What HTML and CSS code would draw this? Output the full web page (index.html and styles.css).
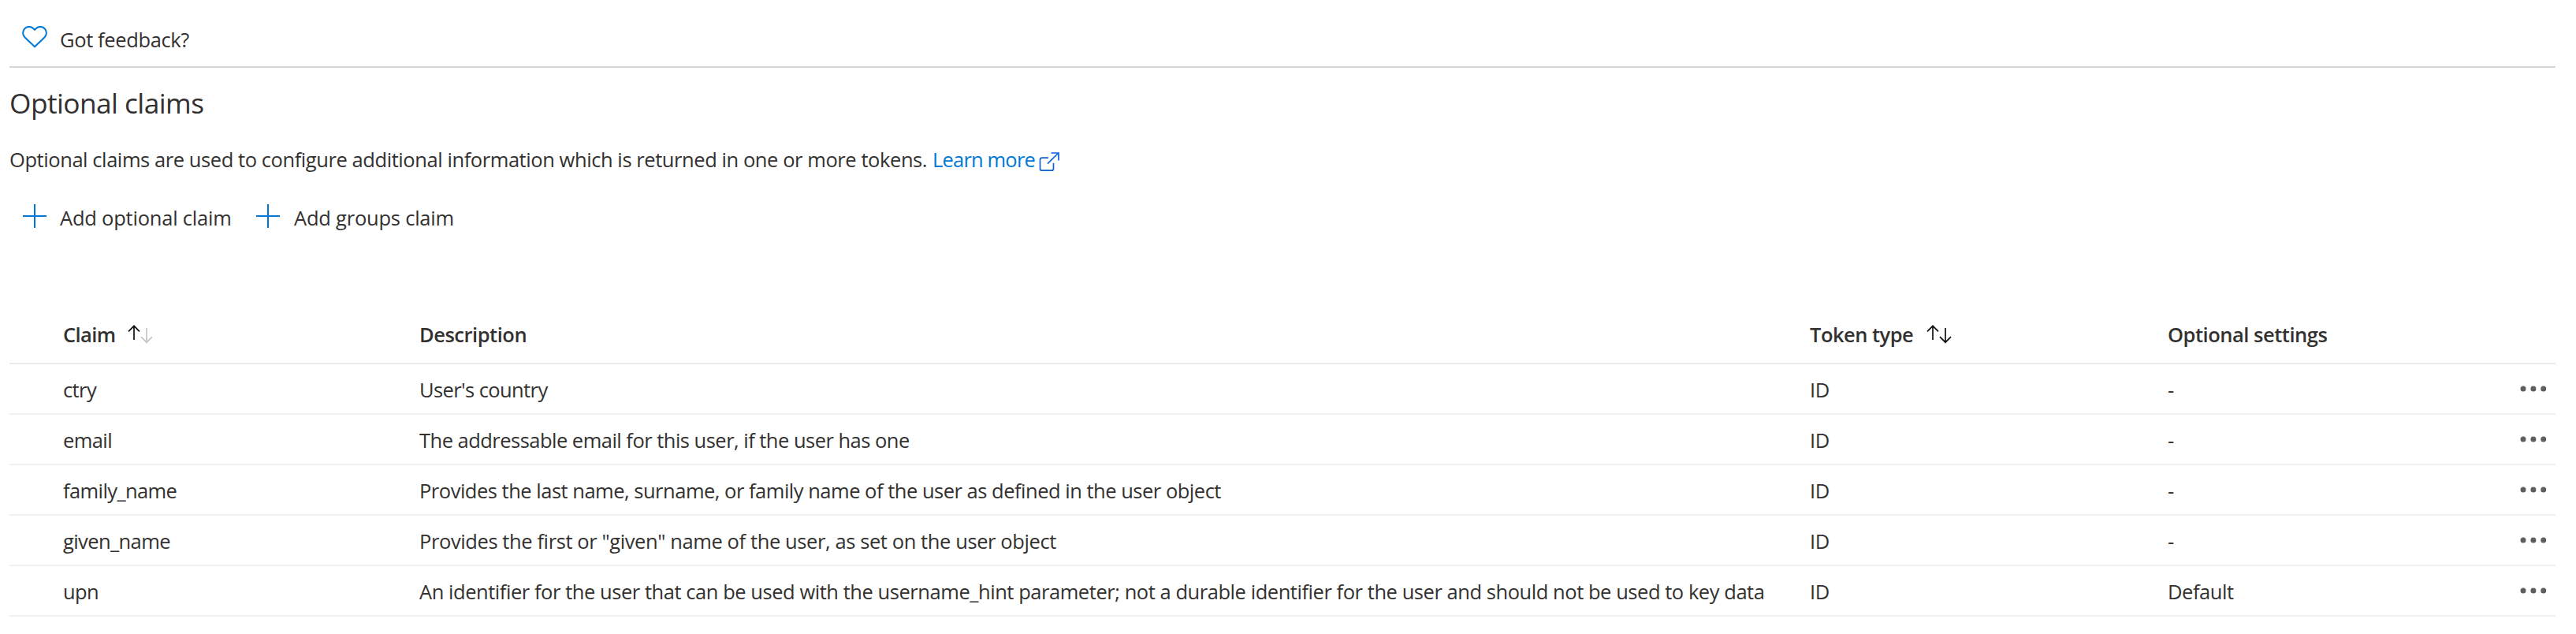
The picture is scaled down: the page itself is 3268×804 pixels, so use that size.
FILE: index.html
```html
<!DOCTYPE html>
<html lang="en">
<head>
<meta charset="utf-8">
<title>Optional claims</title>
<link rel="stylesheet" href="styles.css">
</head>
<body>
<svg class="defs" width="0" height="0" aria-hidden="true">
  <symbol id="plus" viewBox="0 0 30 30"><path d="M15 0v30M0 15h30" fill="none" stroke="#0078d4" stroke-width="2"/></symbol>
  <symbol id="dots" viewBox="0 0 34 8"><g fill="#605e5c"><circle cx="4" cy="4" r="3.5"/><circle cx="16.9" cy="4" r="3.5"/><circle cx="29.7" cy="4" r="3.5"/></g></symbol>
  <symbol id="up" viewBox="0 0 16 20"><path d="M8 19V1.5M1 8.3l7-7 7 7" fill="none" stroke="currentColor" stroke-width="1.7"/></symbol>
  <symbol id="down" viewBox="0 0 16 20"><path d="M8 0v18M1 11.2l7 7 7-7" fill="none" stroke="currentColor" stroke-width="1.7"/></symbol>
</svg>
<main class="page">
  <div class="feedback">
    <svg class="heart" viewBox="0 0 32 28"><path d="M16 26.3 3.4 14.2A7.7 7.7 0 0 1 14.4 3.2L16 4.8l1.6-1.6a7.7 7.7 0 0 1 11 11z" fill="none" stroke="#0078d4" stroke-width="2"/></svg>
    <span class="t-feedback">Got feedback?</span>
  </div>
  <h1 class="title">Optional claims</h1>
  <p class="intro"><span>Optional claims are used to configure additional information which is returned in one or more tokens.</span><a class="link">Learn more</a><svg class="external" viewBox="0 0 28 26"><path d="M13 8.2H5a2.5 2.5 0 0 0-2.5 2.5v11A2.5 2.5 0 0 0 5 24.2h12a2.5 2.5 0 0 0 2.500-2.500v-7M12 15.700 25.700 2M16.500 2h9.500v9.500" fill="none" stroke="#1160dc" stroke-width="1.7"/></svg></p>
  <div class="commands">
    <div class="command first"><svg class="plus"><use href="#plus"/></svg><span>Add optional claim</span></div>
    <div class="command"><svg class="plus"><use href="#plus"/></svg><span>Add groups claim</span></div>
  </div>
  <section class="table">
    <div class="row head">
      <div class="claim"><span class="label-claim">Claim</span><span class="sort"><svg class="arrow"><use href="#up"/></svg><svg class="arrow low muted"><use href="#down"/></svg></span></div>
      <div>Description</div>
      <div><span class="label-token">Token type</span><span class="sort"><svg class="arrow"><use href="#up"/></svg><svg class="arrow low"><use href="#down"/></svg></span></div>
      <div>Optional settings</div>
    </div>
    <div class="row"><div class="claim">ctry</div><div class="d-country">User's country</div><div>ID</div><div>-</div><svg class="dots"><use href="#dots"/></svg></div>
    <div class="row"><div class="claim">email</div><div class="d-email">The addressable email for this user, if the user has one</div><div>ID</div><div>-</div><svg class="dots"><use href="#dots"/></svg></div>
    <div class="row"><div class="claim">family_name</div><div class="d-family">Provides the last name, surname, or family name of the user as defined in the user object</div><div>ID</div><div>-</div><svg class="dots"><use href="#dots"/></svg></div>
    <div class="row"><div class="claim">given_name</div><div class="d-given">Provides the first or "given" name of the user, as set on the user object</div><div>ID</div><div>-</div><svg class="dots"><use href="#dots"/></svg></div>
    <div class="row"><div class="claim">upn</div><div class="d-upn">An identifier for the user that can be used with the username_hint parameter; not a durable identifier for the user and should not be used to key data</div><div>ID</div><div>Default</div><svg class="dots"><use href="#dots"/></svg></div>
  </section>
</main>
</body>
</html>
```
FILE: styles.css
```css
* { box-sizing: border-box; }
body {
  margin: 0;
  background: #fff;
  color: #323130;
  font: 25.5px/36px "Open Sans", "Noto Sans", sans-serif;
  letter-spacing: -0.44px;
  white-space: nowrap;
}
.defs { display: block; }
svg { display: block; flex: none; }
.page { padding: 0 26px 0 12px; }

.feedback {
  display: flex;
  gap: 16px;
  height: 86px;
  padding: 32px 0 0 16px;
  border-bottom: 2px solid #d6d6d6;
}
.heart { width: 32px; height: 28px; margin-top: 1px; }
.t-feedback { letter-spacing: -0.37px; }

.title {
  margin: 20px 0 30px;
  font-size: 35.3px;
  line-height: 48px;
  font-weight: 400;
  letter-spacing: -0.57px;
}
.intro { display: flex; margin: 0; letter-spacing: -0.427px; }
.link { margin-left: 7px; color: #0078d4; letter-spacing: -0.83px; }
.external { width: 28px; height: 26px; margin: 8px 0 0 4px; }

.commands { display: flex; margin-top: 38px; padding-left: 17px; letter-spacing: -0.22px; }
.command { display: flex; gap: 17px; }
.command.first { width: 296px; }
.command + .command { gap: 18px; }
.plus { width: 30px; height: 30px; margin-top: 1px; }

.table { margin-top: 94px; }
.row {
  display: grid;
  grid-template-columns: 520px 1764px 454px 1fr 34px;
  align-items: center;
  height: 64px;
  padding: 2px 11px 0 0;
  border-bottom: 2px solid #f0f0f0;
}
.claim { padding-left: 68px; letter-spacing: -0.6px; }
.head { height: 74px; padding-top: 0; border-color: #ebebeb; font-weight: 600; letter-spacing: -0.48px; }
.head > div { display: flex; align-items: center; }
.label-claim { width: 82px; }
.label-token { width: 148px; letter-spacing: -0.52px; }
.sort { display: flex; color: #111; }
.arrow { width: 16px; height: 20px; margin-bottom: 2px; }
.low { margin: 4px 0 0; }
.muted { color: #c8c6c4; }
.dots { width: 34px; height: 8px; margin-top: -2px; }

.d-country { letter-spacing: -0.6px; }
.d-email { letter-spacing: -0.52px; }
.d-family { letter-spacing: -0.49px; }
.d-given { letter-spacing: -0.4px; }
.d-upn { letter-spacing: -0.45px; }
```
